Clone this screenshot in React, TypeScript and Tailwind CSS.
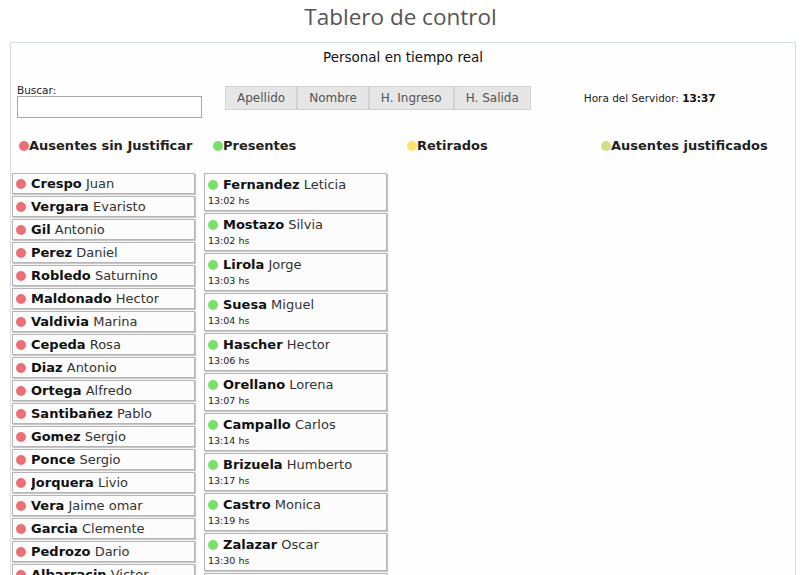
import React from "react";

type Absent = { last: string; first: string };
type Present = { last: string; first: string; time: string };

const absents: Absent[] = [
  { last: "Crespo", first: "Juan" },
  { last: "Vergara", first: "Evaristo" },
  { last: "Gil", first: "Antonio" },
  { last: "Perez", first: "Daniel" },
  { last: "Robledo", first: "Saturnino" },
  { last: "Maldonado", first: "Hector" },
  { last: "Valdivia", first: "Marina" },
  { last: "Cepeda", first: "Rosa" },
  { last: "Diaz", first: "Antonio" },
  { last: "Ortega", first: "Alfredo" },
  { last: "Santibañez", first: "Pablo" },
  { last: "Gomez", first: "Sergio" },
  { last: "Ponce", first: "Sergio" },
  { last: "Jorquera", first: "Livio" },
  { last: "Vera", first: "Jaime omar" },
  { last: "Garcia", first: "Clemente" },
  { last: "Pedrozo", first: "Dario" },
  { last: "Albarracin", first: "Victor" },
];

const presents: Present[] = [
  { last: "Fernandez", first: "Leticia", time: "13:02" },
  { last: "Mostazo", first: "Silvia", time: "13:02" },
  { last: "Lirola", first: "Jorge", time: "13:03" },
  { last: "Suesa", first: "Miguel", time: "13:04" },
  { last: "Hascher", first: "Hector", time: "13:06" },
  { last: "Orellano", first: "Lorena", time: "13:07" },
  { last: "Campallo", first: "Carlos", time: "13:14" },
  { last: "Brizuela", first: "Humberto", time: "13:17" },
  { last: "Castro", first: "Monica", time: "13:19" },
  { last: "Zalazar", first: "Oscar", time: "13:30" },
  { last: "Gutierrez", first: "Mario", time: "13:31" },
];

const sortButtons = ["Apellido", "Nombre", "H. Ingreso", "H. Salida"];

const headers = [
  { label: "Ausentes sin Justificar", dot: "bg-[#ec6f77]" },
  { label: "Presentes", dot: "bg-[#7be06b]" },
  { label: "Retirados", dot: "bg-[#fde26c]" },
  { label: "Ausentes justificados", dot: "bg-[#d5dd83]" },
];

function Dot({ color }: { color: string }) {
  return <span className={`inline-block h-[10px] w-[10px] shrink-0 rounded-full ${color}`} />;
}

export default function App() {
  return (
    <div className="h-[575px] overflow-hidden bg-white font-['DejaVu_Sans',Verdana,sans-serif] text-[#222]">
      <h1 className="h-[42px] pt-[2px] text-center font-['Open_Sans',sans-serif] text-[22.5px] leading-[30px] text-[#555]">
        Tablero de control
      </h1>

      <section className="ml-[10px] w-[786px] border border-[#d3dee8] bg-[#fefefe] pb-4">
        <p className="pt-[6px] text-center text-[13.5px] leading-[17px] text-[#111]">
          Personal en tiempo real
        </p>

        <div className="mt-[18px] flex items-start pl-[6px]">
          <div className="flex flex-col">
            <label className="text-[10.5px] leading-[13px] text-[#222]">Buscar:</label>
            <input
              type="text"
              className="mt-[-1px] h-[22px] w-[185px] border border-[#a6a6a6] bg-white outline-none"
            />
          </div>

          <div className="ml-[23px] mt-[2px] flex">
            {sortButtons.map((b) => (
              <button
                key={b}
                className="h-[24px] border border-[#d2d2d2] bg-[#e6e6e6] px-[11px] text-[12px] text-[#555]"
              >
                {b}
              </button>
            ))}
          </div>

          <p className="ml-[53px] mt-[8px] text-[10.5px] leading-[13px] text-[#222]">
            Hora del Servidor: <b className="text-[#111]">13:37</b>
          </p>
        </div>

        <div className="mt-[20px] grid grid-cols-[194px_194px_194px_194px] pl-[8px]">
          {headers.map((h) => (
            <div key={h.label} className="flex items-center">
              <Dot color={h.dot} />
              <span className="text-[13px] font-bold leading-[16px] text-[#222]">{h.label}</span>
            </div>
          ))}
        </div>

        <div className="mt-[19px] flex items-start gap-[9px] pl-[1px]">
          <ul className="flex w-[183px] flex-col gap-[2px]">
            {absents.map((p) => (
              <li
                key={p.last}
                className="flex h-[21px] items-center gap-[5px] border border-[#b5b5b5] bg-[#fcfcfc] pl-[3px] shadow-[1px_1px_1px_#c8c8c8]"
              >
                <Dot color="bg-[#ec6f77]" />
                <span className="truncate text-[13px] leading-[16px]">
                  <b className="text-[#111]">{p.last}</b> <span className="text-[#333]">{p.first}</span>
                </span>
              </li>
            ))}
          </ul>

          <ul className="flex w-[183px] flex-col gap-[2px]">
            {presents.map((p) => (
              <li
                key={p.last}
                className="flex h-[38px] flex-col border border-[#b5b5b5] bg-[#fcfcfc] pl-[3px] shadow-[1px_1px_1px_#c8c8c8]"
              >
                <div className="mt-[2px] flex items-center gap-[5px]">
                  <Dot color="bg-[#7be06b]" />
                  <span className="truncate text-[13px] leading-[17px]">
                    <b className="text-[#111]">{p.last}</b> <span className="text-[#333]">{p.first}</span>
                  </span>
                </div>
                <span className="mt-[2px] text-[9.5px] leading-[12px] text-[#222]">{p.time} hs</span>
              </li>
            ))}
          </ul>
        </div>
      </section>
    </div>
  );
}
